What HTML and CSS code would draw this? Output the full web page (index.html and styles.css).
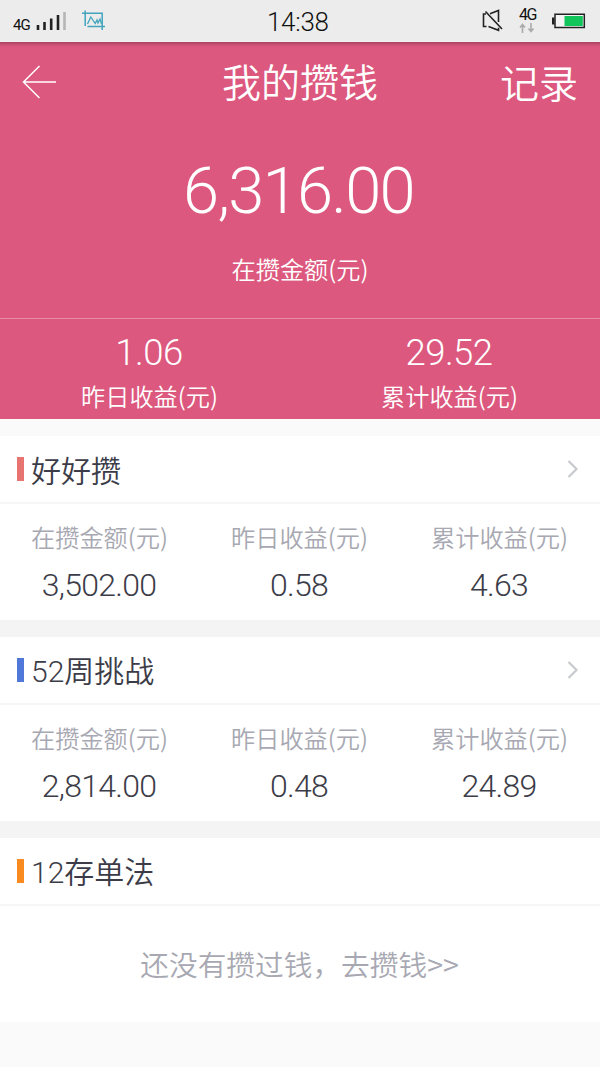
FILE: index.html
```html
<!DOCTYPE html>
<html lang="zh-CN">
<head>
<meta charset="utf-8">
<title>我的攒钱</title>
<link rel="stylesheet" href="styles.css">
</head>
<body>
<div class="status">
  <span class="net">4G</span>
  <svg class="signal" width="30" height="20" viewBox="0 0 30 20"><path d="M2 14v5M8.500 11v8M15.200 7.500v11.500M22 4v15" stroke="#222" stroke-width="2.600"/><path d="M28.500 1v18" stroke="#b5b5b5" stroke-width="2.600"/></svg>
  <svg class="shot" width="24" height="20" viewBox="0 0 24 20" fill="none" stroke="#42a5bd" stroke-width="1.500"><path d="M0 3.200h20.200V20M3.200 .5v15.500M5.500 16.500H23"/><path d="M5.500 14l3.300-7 4.400 6.500 1.800-3.500 1 3 2-4 1.500 5" stroke-width="1.300"/></svg>
  <span class="clock">14:38</span>
  <svg class="mute" width="22" height="24" viewBox="0 0 22 24" fill="none" stroke="#222" stroke-width="1.600"><path d="M4 5H1.500v12.500H4.500M6.500 17.500l10 3.800v-2.500M8 4.800l8.500-3.300V13M3.500 2.500L20 20"/></svg>
  <span class="data"><span class="data-label">4G</span><svg width="16" height="10" viewBox="0 0 16 10" fill="none" stroke="#aaa" stroke-width="1.600"><path d="M3.500 10V1.500M1 4.500l2.500-3L6 4.500M12 0v8.500M9.500 5.500l2.500 3 2.500-3"/></svg></span>
  <svg class="battery" width="34" height="16" viewBox="0 0 34 16"><path d="M0 4.500h2.500v7H0z" fill="#222"/><path d="M3 1.200h29.300v13.300H3z" fill="#f4f4f4" stroke="#222" stroke-width="1.500"/><path d="M12.500 3h18.300v10H12.500z" fill="#11c55a"/></svg>
</div>
<header class="hero">
  <nav class="bar">
    <svg width="35" height="34" viewBox="0 0 35 34" fill="none" stroke="#fff" stroke-width="1.500"><path d="M17.500 1 1.500 17l16 16M1.500 17H34"/></svg>
    <h1 class="title">我的攒钱</h1>
    <span class="record">记录</span>
  </nav>
  <div class="total num">6,316.00</div>
  <div class="total-label">在攒金额(元)</div>
  <div class="income">
    <div><div class="income-value num">1.06</div><div class="income-label">昨日收益(元)</div></div>
    <div><div class="income-value num">29.52</div><div class="income-label">累计收益(元)</div></div>
  </div>
</header>
<main class="cards">
  <section class="card">
    <div class="head"><i class="mark red"></i><h2 class="name">好好攒</h2><svg class="chev" width="12" height="20" viewBox="0 0 12 20" fill="none" stroke="#c8cacf" stroke-width="2.200"><path d="M1.500 2l8 8-8 8"/></svg></div>
    <div class="stats">
      <div><div class="label">在攒金额(元)</div><div class="value num">3,502.00</div></div>
      <div><div class="label">昨日收益(元)</div><div class="value num">0.58</div></div>
      <div><div class="label">累计收益(元)</div><div class="value num">4.63</div></div>
    </div>
  </section>
  <section class="card">
    <div class="head"><i class="mark blue"></i><h2 class="name"><span class="num">52</span>周挑战</h2><svg class="chev" width="12" height="20" viewBox="0 0 12 20" fill="none" stroke="#c8cacf" stroke-width="2.200"><path d="M1.500 2l8 8-8 8"/></svg></div>
    <div class="stats">
      <div><div class="label">在攒金额(元)</div><div class="value num">2,814.00</div></div>
      <div><div class="label">昨日收益(元)</div><div class="value num">0.48</div></div>
      <div><div class="label">累计收益(元)</div><div class="value num">24.89</div></div>
    </div>
  </section>
  <section class="card">
    <div class="head"><i class="mark orange"></i><h2 class="name"><span class="num">12</span>存单法</h2></div>
    <div class="empty">还没有攒过钱，去攒钱&gt;&gt;</div>
  </section>
</main>
</body>
</html>
```
FILE: styles.css
```css
* { box-sizing: border-box; }
body {
  margin: 0;
  background: #fafafa;
  color: #3c3c48;
  font-family: "Noto Sans CJK SC", sans-serif;
  font-weight: 350;
}
svg { display: block; flex: none; }
h1, h2 { margin: 0; font-weight: 350; }
.num { font-family: Roboto, "Liberation Sans", sans-serif; font-weight: 300; }

.status {
  display: flex;
  align-items: flex-start;
  height: 42px;
  padding-left: 13px;
  background: #ececec;
  border-bottom: 1px solid #f6f2f4;
  color: #111;
  font-family: Roboto, "Liberation Sans", sans-serif;
  font-weight: 400;
}
.net { width: 23px; margin-top: 17px; font-size: 15px; line-height: 16px; letter-spacing: -1px; }
.signal { margin-top: 11px; }
.shot { margin: 10px 0 0 16px; }
.clock { width: 66px; margin: 8px 0 0 161px; font-size: 26px; line-height: 29px; font-weight: 350; letter-spacing: -0.300px; }
.mute { margin: 9px 0 0 149px; }
.data { width: 20px; margin: 6px 0 0 15px; }
.data-label { display: block; font-size: 16px; line-height: 17px; letter-spacing: -1.500px; }
.battery { margin: 13px 0 0 13px; }

.hero {
  height: 377px;
  background: linear-gradient(#a5405f 0, #c44f70 2px, #dc587e 5px);
  color: #fff;
}
.bar {
  display: grid;
  grid-template-columns: 1fr auto 1fr;
  align-items: center;
  height: 79px;
  padding: 0 22px;
}
.title { padding-bottom: 4px; font-size: 39px; line-height: 56px; }
.record { justify-self: end; padding-bottom: 2px; font-size: 39px; line-height: 56px; }
.total { height: 100px; padding: 30px 3px 0 0; text-align: center; font-size: 65px; line-height: 80px; letter-spacing: -1.700px; }
.total-label { height: 97px; padding-top: 30px; text-align: center; font-size: 24.200px; line-height: 36px; }
.income { display: grid; grid-template-columns: 1fr 1fr; height: 101px; border-top: 1px solid #e98ca6; text-align: center; }
.income-value { padding: 12px 2px 0 0; font-size: 36.500px; line-height: 44px; letter-spacing: -0.500px; }
.income-label { padding: 3px 1px 0 0; font-size: 24.200px; line-height: 36px; }

.cards { display: grid; gap: 17px; margin-top: 17px; background: #f4f4f4; }
.card { height: 184px; background: #fff; }
.head { display: flex; align-items: center; height: 68px; padding: 0 21px 0 17px; border-bottom: 2px solid #f6f6f7; }
.mark { width: 7px; height: 24px; margin-right: 7px; }
.red { background: #e87472; }
.blue { background: #5078d8; }
.orange { background: #f98a20; }
.name { flex: 1; font-size: 30px; line-height: 44px; }
.stats { display: grid; grid-template-columns: repeat(3, 1fr); text-align: center; }
.label { padding: 15px 1px 0 0; color: #a7a8b2; font-size: 24.200px; line-height: 36px; }
.value { padding: 11px 2px 0 0; font-size: 32px; line-height: 38px; letter-spacing: -0.700px; }
.empty { padding: 37px 1px 0 0; text-align: center; color: #a7a8b2; font-size: 28.700px; line-height: 42px; }
```
